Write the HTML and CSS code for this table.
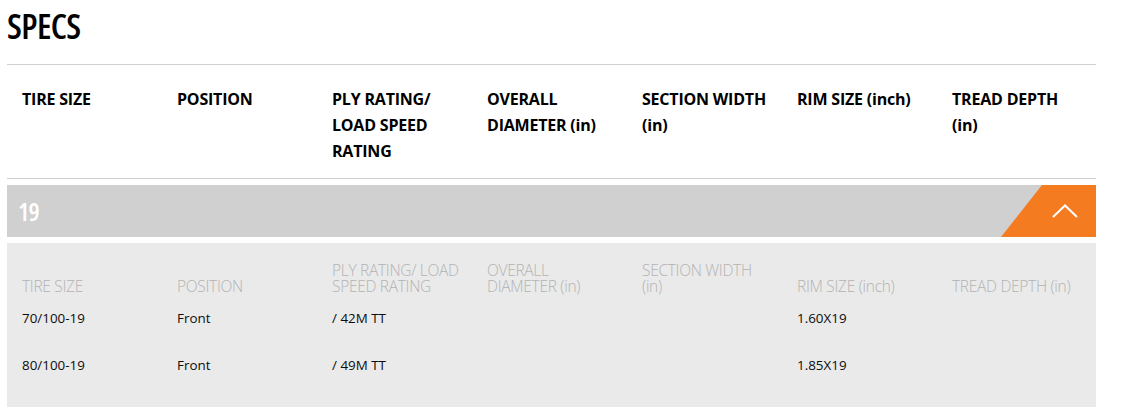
FILE: index.html
```html
<!DOCTYPE html>
<html lang="en">
<head>
<meta charset="utf-8">
<title>Specs</title>
<link rel="stylesheet" href="styles.css">
</head>
<body>
<section class="specs">
  <h2 class="specs-title">SPECS</h2>
  <div class="head-row">
    <div class="head-cell">TIRE SIZE</div>
    <div class="head-cell">POSITION</div>
    <div class="head-cell">PLY RATING/ LOAD SPEED RATING</div>
    <div class="head-cell">OVERALL DIAMETER (in)</div>
    <div class="head-cell">SECTION WIDTH (in)</div>
    <div class="head-cell">RIM SIZE (inch)</div>
    <div class="head-cell">TREAD DEPTH (in)</div>
  </div>
  <div class="group-bar">
    <span class="group-label">19</span>
    <button class="group-toggle" aria-label="Collapse">
      <svg width="26" height="14" viewBox="0 0 26 14"><path d="M1 13 L13 1.5 L25 13" fill="none" stroke="#fff" stroke-width="2"/></svg>
    </button>
  </div>
  <div class="group-body">
    <div class="row sub">
      <div class="cell">TIRE SIZE</div>
      <div class="cell">POSITION</div>
      <div class="cell">PLY RATING/ LOAD SPEED RATING</div>
      <div class="cell">OVERALL DIAMETER (in)</div>
      <div class="cell">SECTION WIDTH (in)</div>
      <div class="cell">RIM SIZE (inch)</div>
      <div class="cell">TREAD DEPTH (in)</div>
    </div>
    <div class="row data">
      <div class="cell">70/100-19</div>
      <div class="cell">Front</div>
      <div class="cell">/ 42M TT</div>
      <div class="cell"></div>
      <div class="cell"></div>
      <div class="cell">1.60X19</div>
      <div class="cell"></div>
    </div>
    <div class="row data">
      <div class="cell">80/100-19</div>
      <div class="cell">Front</div>
      <div class="cell">/ 49M TT</div>
      <div class="cell"></div>
      <div class="cell"></div>
      <div class="cell">1.85X19</div>
      <div class="cell"></div>
    </div>
  </div>
</section>
</body>
</html>
```
FILE: styles.css
```css
* { box-sizing: border-box; }
html, body { margin: 0; padding: 0; background: #fff; }
body { font-family: "Open Sans", "Liberation Sans", sans-serif; color: #111; }

.specs { width: 1089px; margin-left: 7px; }

.specs-title {
  margin: 0;
  padding-top: 8px;
  height: 64px;
  font-family: "Open Sans", sans-serif;
  font-stretch: 75%;
  font-weight: 600;
  font-size: 35px;
  line-height: 36px;
  color: #000;
  letter-spacing: -0.6px;
}

.head-row {
  display: grid;
  grid-template-columns: repeat(7, 155px);
  border-top: 1px solid #cfcfcf;
  border-bottom: 1px solid #cfcfcf;
  padding: 21px 0 14px;
}
.head-cell {
  padding: 0 10px 0 15px;
  font-size: 16px;
  font-weight: 700;
  line-height: 26px;
  letter-spacing: -0.2px;
  color: #000;
}

.group-bar {
  margin-top: 6px;
  height: 52px;
  background: #d0d0d0;
  display: flex;
  align-items: center;
  justify-content: space-between;
}
.group-label {
  padding-left: 11px;
  font-stretch: 75%;
  font-weight: 600;
  font-size: 25px;
  line-height: 30px;
  letter-spacing: -0.8px;
  color: #fff;
}
.group-toggle {
  border: 0;
  margin: 0;
  padding: 0;
  width: 95px;
  height: 52px;
  background: #f47b20;
  clip-path: polygon(41px 0, 100% 0, 100% 100%, 0 100%);
  display: flex;
  align-items: center;
  justify-content: flex-end;
  padding-right: 18px;
  cursor: pointer;
}
.group-toggle svg { display: block; margin-top: -1px; }

.group-body {
  margin-top: 6px;
  background: #eaeaea;
  padding-top: 19px;
  padding-bottom: 40px;
}
.row {
  display: grid;
  grid-template-columns: repeat(7, 155px);
  align-items: end;
}
.cell { padding: 0 10px 0 15px; }
.row.sub .cell {
  font-size: 15.5px;
  font-weight: 300;
  line-height: 16px;
  letter-spacing: -0.3px;
  color: #b3b3b3;
}
.row.data .cell {
  font-size: 13.4px;
  line-height: 18px;
  color: #0d0d0d;
}
.row.sub + .row.data { margin-top: 15px; }
.row.data + .row.data { margin-top: 29px; }
```
